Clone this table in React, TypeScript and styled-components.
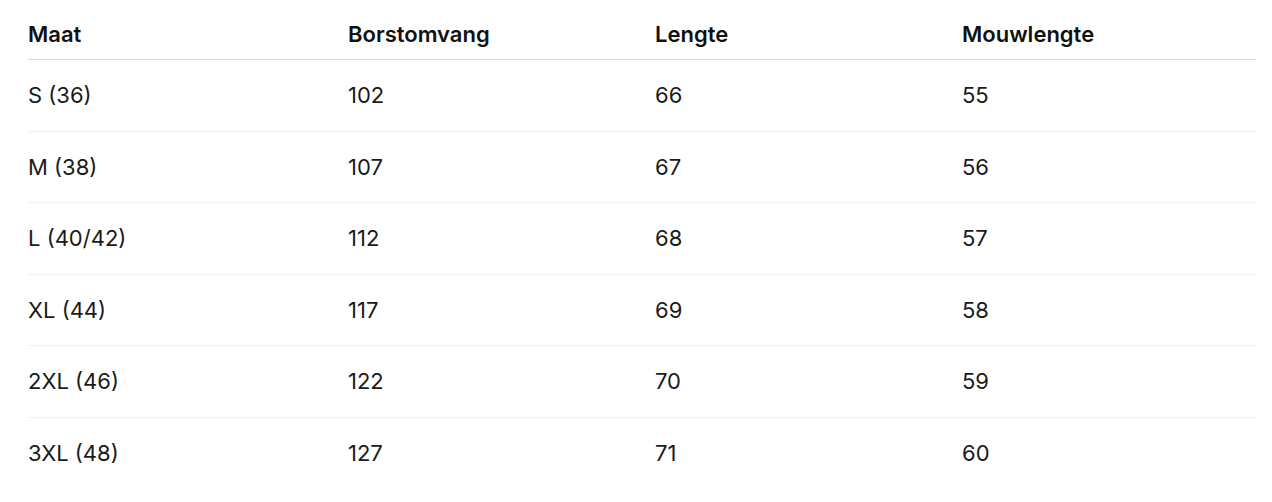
import React from "react";
import styled, { createGlobalStyle } from "styled-components";

const GlobalStyle = createGlobalStyle`
   html, body {
      margin: 0;
      padding: 0;
      background: #ffffff;
   }

   body {
      font-family: Inter, "Noto Sans", "Liberation Sans", sans-serif;
      color: #111111;
      -webkit-font-smoothing: antialiased;
   }
`;

const Page = styled.div`
   padding: 9px 16px 0 28px;
`;

const Table = styled.table`
   width: 100%;
   border-collapse: collapse;
   font-size: 22px;
   line-height: 24px;
`;

const HeadCell = styled.th<{ width?: number }>`
   width: ${(props) => (props.width ? `${props.width}px` : "auto")};
   padding: 13px 0 13px;
   text-align: left;
   font-weight: 600;
   color: #111111;
   border-bottom: 1px solid #d9d9d9;
`;

const Row = styled.tr`
   & + & td {
      border-top: 1px solid #efefef;
   }
`;

const Cell = styled.td`
   padding: 23px 0 23.5px;
   text-align: left;
   font-weight: 400;
   color: #1a1a1a;
`;

const columns = [
   { label: "Maat", width: 320 },
   { label: "Borstomvang", width: 307 },
   { label: "Lengte", width: 307 },
   { label: "Mouwlengte" },
];

const sizes = [
   ["S (36)", "102", "66", "55"],
   ["M (38)", "107", "67", "56"],
   ["L (40/42)", "112", "68", "57"],
   ["XL (44)", "117", "69", "58"],
   ["2XL (46)", "122", "70", "59"],
   ["3XL (48)", "127", "71", "60"],
];

const App: React.FC = () => {
   return (
      <>
         <GlobalStyle />
         <Page>
            <Table>
               <thead>
                  <tr>
                     {columns.map((col) => (
                        <HeadCell key={col.label} width={col.width}>
                           {col.label}
                        </HeadCell>
                     ))}
                  </tr>
               </thead>
               <tbody>
                  {sizes.map((row) => (
                     <Row key={row[0]}>
                        {row.map((value, i) => (
                           <Cell key={i}>{value}</Cell>
                        ))}
                     </Row>
                  ))}
               </tbody>
            </Table>
         </Page>
      </>
   );
};

export default App;
